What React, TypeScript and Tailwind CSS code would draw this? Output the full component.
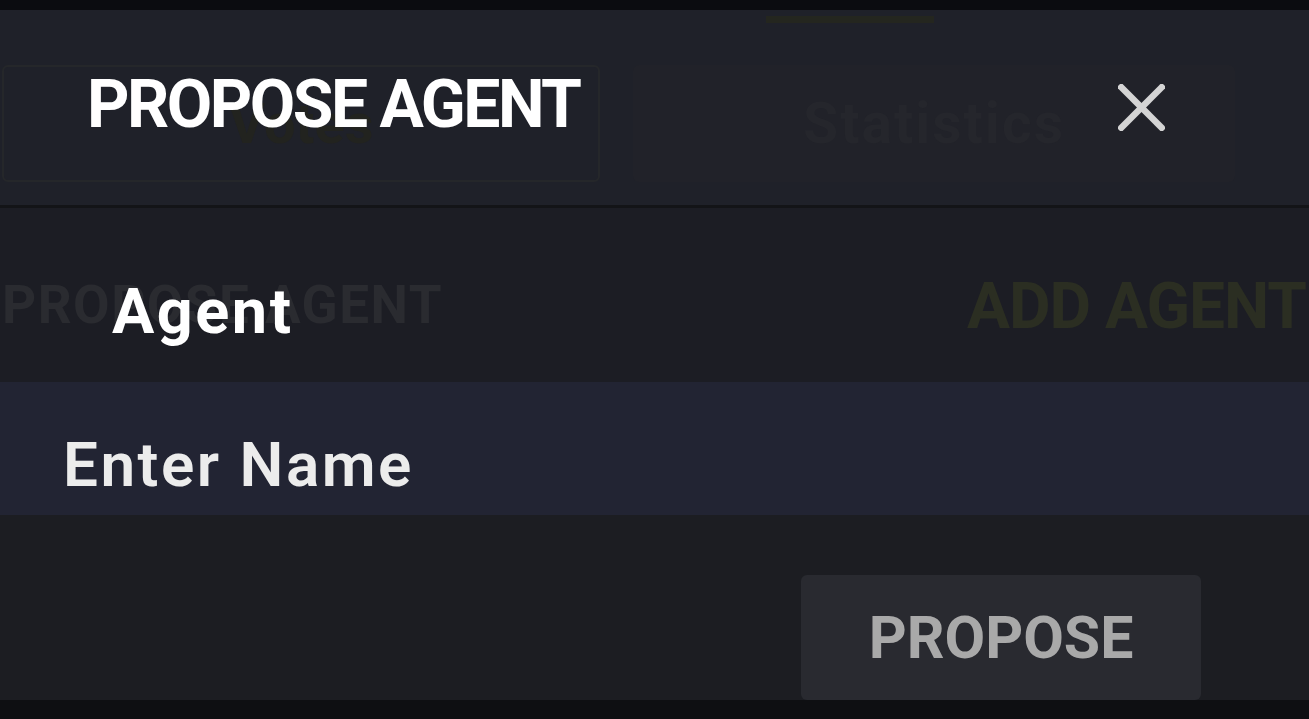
export default function App() {
  return (
    <div className="relative h-[719px] w-full overflow-hidden bg-[#0c0d11] font-['Roboto',sans-serif]">
      {/* dimmed page behind the dialog */}
      <div className="flex h-full flex-col">
        <div className="h-[10px] bg-[#0b0c10]" />
        <div className="flex h-[195px] flex-col bg-[#1f2129]">
          <div className="ml-[766px] mt-[6px] h-[7px] w-[168px] bg-[#24261f]" />
          <div className="mt-[42px] flex h-[117px] items-center">
            <div className="ml-[2px] flex h-full w-[598px] items-center justify-center rounded-md border-2 border-[#25272a]">
              <span className="text-[56px] font-bold leading-none text-[#22231f]">Votes</span>
            </div>
            <div className="ml-[33px] flex h-full w-[602px] items-center justify-center rounded-md bg-[#212229]">
              <span className="text-[57px] font-bold leading-none tracking-[2px] text-[#25262c]">Statistics</span>
            </div>
          </div>
        </div>
        <div className="h-[3px] bg-[#131417]" />
        <div className="flex h-[174px] items-start overflow-hidden bg-[#1c1d24]">
          <span className="ml-[2px] mt-[71px] whitespace-nowrap text-[53px] font-bold leading-none tracking-[1.5px] text-[#2a2b30]">
            PROPOSE AGENT
          </span>
          <span className="ml-auto mr-[3px] mt-[67px] whitespace-nowrap text-[64px] font-bold leading-none tracking-[-1px] text-[#2b2e22]">
            ADD AGENT
          </span>
        </div>
        <div className="h-[133px] bg-[#222433]" />
        <div className="h-[185px] bg-[#1c1d22]" />
        <div className="flex-1 bg-[#0e0f12]" />
      </div>

      {/* dialog */}
      <div className="absolute inset-0 flex flex-col">
        <div className="h-[10px]" />
        <div className="flex h-[195px] items-start justify-between pl-[87px] pr-[144px]">
          <h2 className="mt-[62px] text-[66px] font-bold leading-none tracking-[-2.5px] text-white">PROPOSE AGENT</h2>
          <button className="mt-[74px] h-[47px] w-[47px] text-[#d4d4d4]">
            <svg viewBox="0 0 47 47" width="47" height="47" fill="none" stroke="currentColor" strokeWidth="6.5">
              <line x1="1" y1="1" x2="46" y2="46" />
              <line x1="46" y1="1" x2="1" y2="46" />
            </svg>
          </button>
        </div>
        <div className="h-[3px]" />
        <div className="h-[174px] pl-[112px] pt-[72px]">
          <label className="text-[63px] font-bold leading-none tracking-[2.5px] text-white">Agent</label>
        </div>
        <div className="h-[133px] bg-[#222433] pl-[63px] pt-[52px]">
          <div className="text-[62px] font-semibold leading-none tracking-[2.5px] text-[#ececec]">Enter Name</div>
        </div>
        <div className="flex h-[185px] items-start justify-end pr-[108px] pt-[60px]">
          <button className="flex h-[125px] w-[400px] items-center justify-center rounded-md bg-[#292a30] text-[59px] font-bold leading-none text-[#a9a9a9]">
            PROPOSE
          </button>
        </div>
      </div>
    </div>
  );
}
